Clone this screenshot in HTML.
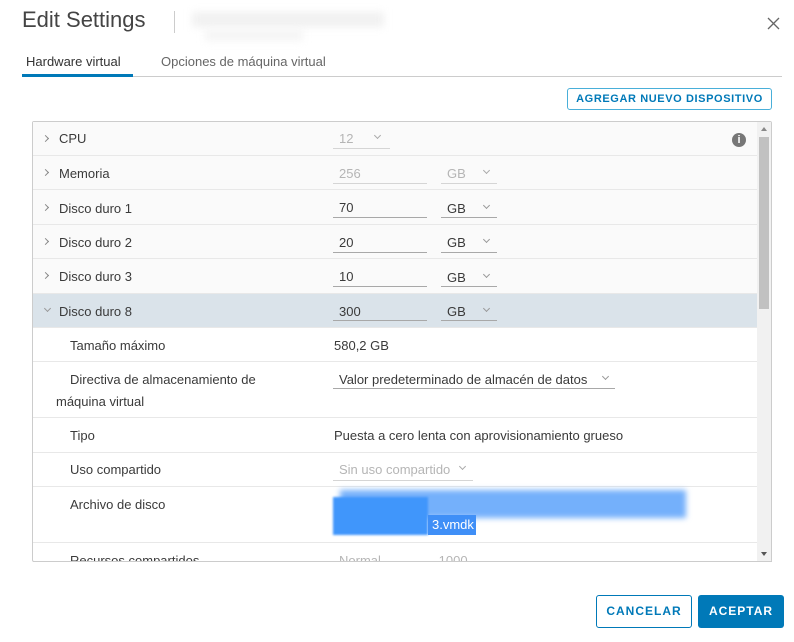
<!DOCTYPE html>
<html><head><meta charset="utf-8"><style>
*{margin:0;padding:0;box-sizing:border-box}
body{width:794px;height:642px;background:#fff;font-family:"Liberation Sans",sans-serif;color:#3a3a3a;position:relative;overflow:hidden}
.a{position:absolute;white-space:nowrap}
.t13{font-size:13px}
.row{position:absolute;left:33px;width:724px;border-bottom:1px solid #e8e8e8}
.ul{position:absolute;border-bottom:1px solid #a8a8a8;height:1px}
.chev{position:absolute;width:5px;height:5px;border-right:1px solid #888;border-bottom:1px solid #888;transform:rotate(-45deg)}
.dn{position:absolute;width:5px;height:5px;border-right:1px solid #999;border-bottom:1px solid #999;transform:rotate(45deg)}
.g{color:#b5b5b5}
</style></head><body>
<div class="a" style="left:22px;top:7px;font-size:22px;color:#444">Edit Settings</div>
<div class="a" style="left:174px;top:11px;width:1px;height:22px;background:#ccc"></div>
<div class="a" style="left:192px;top:12px;width:192px;height:15px;background:#f1f1f1;filter:blur(4px)"></div>
<div class="a" style="left:205px;top:29px;width:98px;height:12px;background:#f5f5f5;filter:blur(4px)"></div>
<svg class="a" style="left:767px;top:17px" width="13" height="13" viewBox="0 0 13 13"><path d="M1 1L12 12M12 1L1 12" stroke="#666" stroke-width="1.3"/></svg>
<div class="a t13" style="left:26px;top:54px;color:#333">Hardware virtual</div>
<div class="a t13" style="left:161px;top:54px;color:#666">Opciones de máquina virtual</div>
<div class="a" style="left:22px;top:76px;width:760px;height:1px;background:#ccc"></div>
<div class="a" style="left:22px;top:74px;width:111px;height:3px;background:#0079b8"></div>
<div class="a" style="left:567px;top:88px;width:205px;height:22px;border:1px solid #49afd9;border-radius:3px;color:#0079b8;font-size:11px;font-weight:bold;letter-spacing:.6px;text-align:center;line-height:20px">AGREGAR NUEVO DISPOSITIVO</div>
<div class="a" style="left:32px;top:121px;width:740px;height:441px;border:1px solid #ccc;border-radius:2px;overflow:hidden"></div>
<div class="row" style="top:122px;height:34px;background:#fafafa"></div>
<div class="row" style="top:156px;height:34px;background:#fafafa"></div>
<div class="row" style="top:190px;height:35px;background:#fafafa"></div>
<div class="row" style="top:225px;height:34px;background:#fafafa"></div>
<div class="row" style="top:259px;height:35px;background:#fafafa"></div>
<div class="row" style="top:294px;height:34px;background:#dae3ea"></div>
<div class="row" style="top:328px;height:34px"></div>
<div class="row" style="top:362px;height:56px"></div>
<div class="row" style="top:418px;height:35px"></div>
<div class="row" style="top:453px;height:34px"></div>
<div class="row" style="top:487px;height:56px"></div>
<div class="chev" style="left:43px;top:136px"></div>
<div class="chev" style="left:43px;top:170px"></div>
<div class="chev" style="left:43px;top:205px"></div>
<div class="chev" style="left:43px;top:239px"></div>
<div class="chev" style="left:43px;top:273px"></div>
<div class="dn" style="left:45px;top:306px"></div>
<div class="a t13" style="left:59px;top:131px">CPU</div>
<div class="a t13" style="left:59px;top:166px">Memoria</div>
<div class="a t13" style="left:59px;top:201px">Disco duro 1</div>
<div class="a t13" style="left:59px;top:235px">Disco duro 2</div>
<div class="a t13" style="left:59px;top:269px">Disco duro 3</div>
<div class="a t13" style="left:59px;top:304px">Disco duro 8</div>
<div class="a t13 g" style="left:339px;top:131px">12</div><div class="dn" style="left:375px;top:133px;border-color:#aaa"></div><div class="ul" style="left:333px;top:148px;width:57px;border-color:#d5d5d5"></div>
<div class="a t13 g" style="left:339px;top:166px">256</div><div class="ul" style="left:333px;top:183px;width:94px;border-color:#d5d5d5"></div>
<div class="a t13 g" style="left:447px;top:166px">GB</div><div class="dn" style="left:484px;top:168px;border-color:#aaa"></div><div class="ul" style="left:441px;top:183px;width:56px;border-color:#d5d5d5"></div>
<div class="a t13" style="left:339px;top:200px">70</div><div class="ul" style="left:333px;top:217px;width:94px"></div>
<div class="a t13" style="left:447px;top:201px">GB</div><div class="dn" style="left:484px;top:203px"></div><div class="ul" style="left:441px;top:217px;width:56px"></div>
<div class="a t13" style="left:339px;top:235px">20</div><div class="ul" style="left:333px;top:252px;width:94px"></div>
<div class="a t13" style="left:447px;top:235px">GB</div><div class="dn" style="left:484px;top:237px"></div><div class="ul" style="left:441px;top:252px;width:56px"></div>
<div class="a t13" style="left:339px;top:269px">10</div><div class="ul" style="left:333px;top:286px;width:94px"></div>
<div class="a t13" style="left:447px;top:270px">GB</div><div class="dn" style="left:484px;top:272px"></div><div class="ul" style="left:441px;top:286px;width:56px"></div>
<div class="a t13" style="left:339px;top:304px">300</div><div class="ul" style="left:333px;top:320px;width:94px"></div>
<div class="a t13" style="left:447px;top:304px">GB</div><div class="dn" style="left:484px;top:306px"></div><div class="ul" style="left:441px;top:320px;width:56px"></div>
<div class="a" style="left:732px;top:133px;width:14px;height:14px;border-radius:50%;background:#777;color:#fff;font-size:11px;font-weight:bold;text-align:center;line-height:14px">i</div>
<div class="a t13" style="left:70px;top:338px">Tamaño máximo</div>
<div class="a t13" style="left:334px;top:338px">580,2 GB</div>
<div class="a t13" style="left:70px;top:372px">Directiva de almacenamiento de</div>
<div class="a t13" style="left:56px;top:394px">máquina virtual</div>
<div class="a t13" style="left:339px;top:372px">Valor predeterminado de almacén de datos</div><div class="dn" style="left:603px;top:374px"></div><div class="ul" style="left:333px;top:388px;width:282px"></div>
<div class="a t13" style="left:70px;top:428px">Tipo</div>
<div class="a t13" style="left:334px;top:428px">Puesta a cero lenta con aprovisionamiento grueso</div>
<div class="a t13" style="left:70px;top:462px">Uso compartido</div>
<div class="a t13 g" style="left:339px;top:462px">Sin uso compartido</div><div class="dn" style="left:460px;top:464px;border-color:#aaa"></div><div class="ul" style="left:333px;top:480px;width:140px;border-color:#d5d5d5"></div>
<div class="a t13" style="left:70px;top:497px">Archivo de disco</div>
<div class="a" style="left:340px;top:490px;width:346px;height:28px;background:#74b0fb;filter:blur(3px)"></div>
<div class="a" style="left:333px;top:497px;width:95px;height:38px;background:#4096fb;filter:blur(1px)"></div>
<div class="a" style="left:428px;top:515px;width:48px;height:20px;background:#3f8ff7;color:#fff;font-size:13px;line-height:20px;padding-left:4px">3.vmdk</div>
<div class="a t13" style="left:70px;top:553px;clip-path:inset(0 0 5px 0)">Recursos compartidos</div>
<div class="a t13 g" style="left:339px;top:553px;clip-path:inset(0 0 5px 0)">Normal &nbsp;&nbsp;&nbsp;&nbsp;&nbsp;&nbsp;&nbsp;&nbsp;&nbsp;&nbsp;&nbsp;&nbsp;&nbsp;&nbsp; 1000</div>
<div class="a" style="left:33px;top:561px;width:738px;height:10px;background:#fff"></div>
<div class="a" style="left:33px;top:561px;width:739px;height:1px;background:#ccc"></div>
<div class="a" style="left:757px;top:122px;width:14px;height:439px;background:#f1f1f1"></div>
<div class="a" style="left:759px;top:137px;width:10px;height:172px;background:#c1c1c1"></div>
<div class="a" style="left:761px;top:127px;border:3px solid transparent;border-bottom:4px solid #888;border-top:0"></div>
<div class="a" style="left:761px;top:552px;border:3px solid transparent;border-top:4px solid #555;border-bottom:0"></div>
<div class="a" style="left:596px;top:595px;width:96px;height:33px;border:1px solid #0079b8;border-radius:3px;color:#0079b8;font-size:12px;font-weight:bold;letter-spacing:1px;text-align:center;line-height:31px">CANCELAR</div>
<div class="a" style="left:698px;top:595px;width:86px;height:33px;background:#0079b8;border-radius:3px;color:#fff;font-size:12px;font-weight:bold;letter-spacing:1px;text-align:center;line-height:33px">ACEPTAR</div>
</body></html>
